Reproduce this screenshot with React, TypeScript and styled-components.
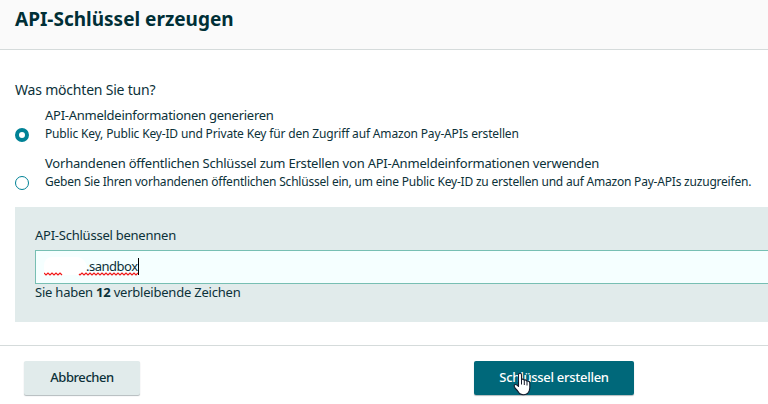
import React from 'react';
import styled, { createGlobalStyle } from 'styled-components';

const ink = '#0c3139';

const GlobalStyle = createGlobalStyle`
  * { box-sizing: border-box; }
  body {
    margin: 0;
    overflow: hidden;
    background: #fff;
    color: ${ink};
    font-family: "Noto Sans", "Open Sans", sans-serif;
    font-size: 13px;
  }
`;

const Dialog = styled.main`
  height: 404px;
  display: flex;
  flex-direction: column;
  overflow: hidden;
`;

const Header = styled.header`
  height: 50px;
  padding: 7px 15px 0;
  background: #fafafa;
  border-bottom: 1px solid #d5dbdb;
`;

const Title = styled.h1`
  margin: 0;
  color: #002f36;
  font-size: 19px;
  font-weight: 700;
  line-height: 24px;
  white-space: nowrap;
`;

const Body = styled.section`
  height: 296px;
  padding: 30px 0 0 15px;
  border-bottom: 1px solid #d5dbdb;
`;

const Question = styled.p`
  margin: 0 0 6px;
  font-size: 14px;
  line-height: 20px;
  letter-spacing: -0.2px;
`;

const Options = styled.div`
  display: grid;
  row-gap: 10px;
`;

const Option = styled.label`
  display: grid;
  grid-template-columns: 14px 1fr;
  column-gap: 16px;
  height: 38px;
`;

const Radio = styled.span<{ $checked?: boolean }>`
  width: 14px;
  height: 14px;
  margin-top: 22px;
  border: ${p => (p.$checked ? '4px' : '1px')} solid #008296;
  border-radius: 50%;
  background: #fff;
`;

const OptionText = styled.span`
  display: flex;
  flex-direction: column;
  white-space: nowrap;
`;

const OptionTitle = styled.span<{ $tracking: number }>`
  line-height: 18px;
  letter-spacing: ${p => p.$tracking}px;
`;

const OptionDescription = styled.span<{ $tracking: number }>`
  font-size: 12px;
  line-height: 19px;
  letter-spacing: ${p => p.$tracking}px;
`;

const NamePanel = styled.div`
  height: 115px;
  margin-top: 15px;
  padding: 19px 0 0 20px;
  background: #e1ebeb;
`;

const FieldLabel = styled.div`
  height: 24px;
  line-height: 18px;
  letter-spacing: -0.24px;
`;

const Field = styled.div`
  display: flex;
  align-items: flex-start;
  height: 34px;
  padding: 6px 0 0 8px;
  border: 1px solid #77bfb3;
  border-right: 0;
  background: #f5ffff;
`;

const Redaction = styled.span`
  width: 43px;
  height: 18px;
  border-radius: 9px 12px 8px 4px;
  background: #fff;
`;

const FieldValue = styled.span`
  margin-left: -1px;
  line-height: 18px;
  letter-spacing: -0.5px;
`;

const Caret = styled.span`
  width: 1px;
  height: 17px;
  margin-top: 1px;
  background: #000;
`;

const Squiggle = styled.svg`
  position: absolute;
  left: 44px;
  top: 272px;
`;

const Remaining = styled.div`
  margin-top: -1px;
  line-height: 18px;
  letter-spacing: -0.22px;
`;

const Footer = styled.footer`
  display: flex;
  justify-content: space-between;
  padding: 15px 134px 0 24px;
`;

const Button = styled.button<{ $primary?: boolean }>`
  width: ${p => (p.$primary ? 160 : 116)}px;
  height: 34px;
  padding: 0 0 2px;
  border: 0;
  border-radius: 2px;
  background: ${p => (p.$primary ? '#00687a' : '#e1ebeb')};
  color: ${p => (p.$primary ? '#fff' : ink)};
  box-shadow: 0 1px 1px rgba(0, 28, 36, 0.3);
  font: 500 13px "Noto Sans", "Open Sans", sans-serif;
  letter-spacing: ${p => (p.$primary ? -0.28 : -0.42)}px;
  white-space: nowrap;
`;

const Pointer = styled.svg`
  position: absolute;
  left: 513px;
  top: 372px;
  pointer-events: none;
`;

export default function App() {
  return (
    <>
      <GlobalStyle />
      <Dialog>
        <Header>
          <Title>API-Schlüssel erzeugen</Title>
        </Header>
        <Body>
          <Question>Was möchten Sie tun?</Question>
          <Options>
            <Option>
              <Radio $checked />
              <OptionText>
                <OptionTitle $tracking={-0.26}>API-Anmeldeinformationen generieren</OptionTitle>
                <OptionDescription $tracking={-0.16}>
                  Public Key, Public Key-ID und Private Key für den Zugriff auf Amazon Pay-APIs erstellen
                </OptionDescription>
              </OptionText>
            </Option>
            <Option>
              <Radio />
              <OptionText>
                <OptionTitle $tracking={-0.215}>
                  Vorhandenen öffentlichen Schlüssel zum Erstellen von API-Anmeldeinformationen verwenden
                </OptionTitle>
                <OptionDescription $tracking={-0.207}>
                  Geben Sie Ihren vorhandenen öffentlichen Schlüssel ein, um eine Public Key-ID zu erstellen und auf Amazon Pay-APIs zuzugreifen.
                </OptionDescription>
              </OptionText>
            </Option>
          </Options>
          <NamePanel>
            <FieldLabel>API-Schlüssel benennen</FieldLabel>
            <Field>
              <Redaction />
              <FieldValue>.sandbox</FieldValue>
              <Caret />
            </Field>
            <Remaining>
              Sie haben <b>12</b> verbleibende Zeichen
            </Remaining>
          </NamePanel>
        </Body>
        <Footer>
          <Button>Abbrechen</Button>
          <Button $primary>Schlüssel erstellen</Button>
        </Footer>
      </Dialog>
      <Squiggle width="94" height="4" viewBox="0 0 94 4" fill="none" stroke="#f01818" strokeWidth="1.2">
        <path d="M0 1l2 2 2-2 2 2 2-2 2 2 2-2 2 2 2-2 2 2" />
        <path d="M35 2l1 1 2-2 2 2 2-2 2 2 2-2 2 2 2-2 2 2 2-2 2 2 2-2 2 2 2-2 2 2 2-2 2 2 2-2 2 2 2-2 2 2 2-2 2 2 2-2 2 2 2-2 2 2 2-2 2 2 2-2" />
      </Squiggle>
      <Pointer width="19" height="24" viewBox="0 0 19 24">
        <path
          d="M5.500 13.500V3Q5.500 1.200 7 1.200T8.500 3V7.500Q9.500 6.500 11.300 8Q12.500 7.400 14 9Q16.800 8.800 16.800 11.500V16Q16.800 19 14.500 21.500Q10 24 6.500 21.500Q5 19 2 16Q.5 13.500 1.700 12.700Q3.300 12 5.500 14.500Z"
          fill="#fff"
          stroke="#151b2c"
          strokeWidth="1.1"
          strokeLinejoin="round"
        />
        <path d="M8.500 7.500v5M11.300 8v5M14 9v4.500" fill="none" stroke="#151b2c" />
      </Pointer>
    </>
  );
}
